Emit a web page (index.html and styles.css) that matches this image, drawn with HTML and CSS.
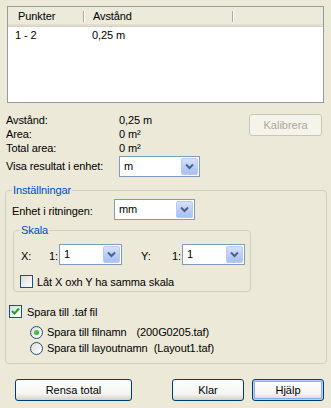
FILE: index.html
```html
<!DOCTYPE html>
<html>
<head>
<meta charset="utf-8">
<link rel="stylesheet" href="styles.css">
</head>
<body>
<div class="dialog">
  <div class="list">
    <div class="list-head">
      <div class="col c1">Punkter</div>
      <div class="col c2">Avstånd</div>
      <div class="col c3"></div>
    </div>
    <div class="list-row">
      <div class="cell c1">1 - 2</div>
      <div class="cell c2">0,25 m</div>
    </div>
  </div>

  <div class="info">
    <div class="info-grid">
      <div class="lbl">Avstånd:</div><div class="val">0,25 m</div>
      <div class="lbl">Area:</div><div class="val">0 m²</div>
      <div class="lbl">Total area:</div><div class="val">0 m²</div>
      <div class="lbl lbl-combo">Visa resultat i enhet:</div>
      <div class="combo combo-unit"><span class="combo-val">m</span><span class="combo-btn"><svg width="9" height="7" viewBox="0 0 9 7"><path d="M1 1.5 L4.5 5 L8 1.5" fill="none" stroke="#4d6185" stroke-width="2"/></svg></span></div>
    </div>
    <button class="btn btn-disabled btn-cal" disabled>Kalibrera</button>
  </div>

  <fieldset class="group group-main">
    <legend>Inställningar</legend>
    <div class="row-enhet">
      <span class="lbl-enhet">Enhet i ritningen:</span>
      <div class="combo combo-mm"><span class="combo-val">mm</span><span class="combo-btn"><svg width="9" height="7" viewBox="0 0 9 7"><path d="M1 1.5 L4.5 5 L8 1.5" fill="none" stroke="#4d6185" stroke-width="2"/></svg></span></div>
    </div>
    <fieldset class="group group-skala">
      <legend>Skala</legend>
      <div class="row-scale">
        <span class="axis">X:</span>
        <span class="ratio">1:</span>
        <div class="combo combo-scale"><span class="combo-val">1</span><span class="combo-btn"><svg width="9" height="7" viewBox="0 0 9 7"><path d="M1 1.5 L4.5 5 L8 1.5" fill="none" stroke="#4d6185" stroke-width="2"/></svg></span></div>
        <span class="axis axis-y">Y:</span>
        <span class="ratio">1:</span>
        <div class="combo combo-scale"><span class="combo-val">1</span><span class="combo-btn"><svg width="9" height="7" viewBox="0 0 9 7"><path d="M1 1.5 L4.5 5 L8 1.5" fill="none" stroke="#4d6185" stroke-width="2"/></svg></span></div>
      </div>
      <label class="check-row check-same">
        <span class="checkbox"></span>
        <span>Låt X oxh Y ha samma skala</span>
      </label>
    </fieldset>
    <label class="check-row check-save">
      <span class="checkbox checked"><svg width="9" height="9" viewBox="0 0 9 9"><path d="M1 4 L3.5 6.5 L8 1.5" fill="none" stroke="#21a121" stroke-width="2"/></svg></span>
      <span>Spara till .taf fil</span>
    </label>
    <label class="radio-row radio-first">
      <span class="radio on"></span>
      <span class="radio-text">Spara till filnamn</span>
      <span class="radio-file f1">(200G0205.taf)</span>
    </label>
    <label class="radio-row">
      <span class="radio"></span>
      <span class="radio-text">Spara till layoutnamn</span>
      <span class="radio-file f2">(Layout1.taf)</span>
    </label>
  </fieldset>

  <div class="buttons">
    <button class="btn btn-rensa">Rensa total</button>
    <button class="btn btn-klar">Klar</button>
    <button class="btn btn-default">Hjälp</button>
  </div>
</div>
</body>
</html>
```

FILE: styles.css
```css
html, body {
  margin: 0;
  padding: 0;
}
body {
  width: 331px;
  height: 408px;
  background: #ece9d8;
  font-family: "Liberation Sans", Arial, sans-serif;
  font-size: 11px;
  letter-spacing: -0.1px;
  color: #000;
  overflow: hidden;
}
.dialog {
  padding-top: 6px;
}

/* list view */
.list {
  margin-left: 7px;
  width: 317px;
  height: 97px;
  box-sizing: border-box;
  border: 1px solid #979a9a;
  background: #fff;
}
.list-head {
  display: flex;
  height: 20px;
  box-sizing: border-box;
  background: #ebeadb;
  border-bottom: 1px solid #d6d2c2;
  box-shadow: inset 0 -2px 0 #e2decd;
}
.col {
  position: relative;
  line-height: 19px;
  padding-left: 10px;
  box-sizing: border-box;
}
.col.c1 { width: 76px; }
.col.c2 { width: 149px; padding-left: 9px; }
.col.c3 { flex: 1; }
.col.c1::after, .col.c2::after {
  content: "";
  position: absolute;
  right: 0;
  top: 4px;
  bottom: 4px;
  width: 1px;
  background: #aca899;
  box-shadow: 1px 0 0 #fff;
}
.list-row {
  display: flex;
  height: 17px;
  line-height: 16px;
}
.cell.c1 { width: 76px; padding-left: 7px; box-sizing: border-box; }
.cell.c2 { padding-left: 8px; }

/* info */
.info {
  display: flex;
  align-items: flex-start;
  margin-top: 10px;
  padding-left: 6px;
  padding-right: 9px;
}
.info-grid {
  display: grid;
  grid-template-columns: 113px 81px;
  grid-auto-rows: 14px;
  line-height: 14px;
}
.lbl-combo {
  line-height: 21px;
  margin-top: 1px;
}
.info-grid .combo-unit {
  margin-top: 1px;
}
.info-grid > :nth-last-child(-n+2) {
  height: 21px;
}
.btn-cal {
  margin-left: auto;
  margin-top: 1px;
  width: 73px;
  height: 23px;
}

/* combo */
.combo {
  display: flex;
  height: 21px;
  box-sizing: border-box;
  border: 1px solid #7f9db9;
  background: #fff;
  padding: 1px;
}
.combo-val {
  flex: 1;
  padding-left: 3px;
  line-height: 17px;
}
.combo-btn {
  width: 17px;
  height: 17px;
  box-sizing: border-box;
  border: 1px solid #b9c9f3;
  border-radius: 2px;
  background: linear-gradient(#d6e2fd, #b6cbf8 60%, #a9c0f3);
  display: flex;
  align-items: center;
  justify-content: center;
}
.combo-unit { width: 81px; }
.combo-mm { width: 81px; }
.combo-scale { width: 63px; }

/* groups */
.group {
  border: 1px solid #d0d0bf;
  border-radius: 4px;
  margin: 0;
  padding: 0;
  min-width: 0;
}
.group legend {
  color: #0046d5;
  padding: 0 1px;
  line-height: 14px;
}
.group-main {
  margin: 14px 0 0 5px;
  width: 322px;
  box-sizing: border-box;
  padding: 0 0 7px 6px;
}
.row-enhet {
  display: flex;
  align-items: center;
  margin-top: 2px;
}
.lbl-enhet {
  width: 102px;
  padding-top: 3px;
}
.group-skala {
  margin: 3px 0 0 1px;
  width: 238px;
  box-sizing: border-box;
  padding: 0 0 3px 6px;
}
.row-scale {
  display: flex;
  align-items: center;
  margin-top: 7px;
}
.axis {
  width: 28px;
  padding-left: 1px;
  padding-top: 2px;
}
.axis-y { margin-left: 18px; width: 31px; }
.ratio {
  width: 10px;
  padding-top: 2px;
}

/* checkbox / radio */
.check-row {
  display: flex;
  align-items: center;
  gap: 4px;
}
.check-same {
  margin-top: 10px;
}
.check-save {
  margin: 13px 0 0 -3px;
  gap: 5px;
}
.checkbox {
  width: 13px;
  height: 13px;
  box-sizing: border-box;
  border: 1px solid #1c5180;
  background: linear-gradient(135deg, #dcdcd7, #fff);
  display: flex;
  align-items: center;
  justify-content: center;
}
.radio-row {
  display: flex;
  align-items: center;
  height: 16px;
  margin-left: 18px;
  white-space: nowrap;
}
.radio-first {
  margin-top: 6px;
}
.radio {
  flex: none;
  width: 13px;
  height: 13px;
  box-sizing: border-box;
  border: 1px solid #1c5180;
  border-radius: 50%;
  background: linear-gradient(135deg, #dcdcd7, #fff);
  margin-right: 4px;
  position: relative;
}
.radio.on::after {
  content: "";
  position: absolute;
  left: 3px;
  top: 3px;
  width: 5px;
  height: 5px;
  border-radius: 50%;
  background: radial-gradient(circle at 40% 40%, #55d051, #21a121);
}
.radio-file.f1 { margin-left: 10px; }
.radio-file.f2 { margin-left: 6px; }

/* buttons */
.btn {
  font-family: inherit;
  font-size: 11px;
  color: #000;
  height: 22px;
  box-sizing: border-box;
  border: 1px solid #003c74;
  border-radius: 3px;
  background: linear-gradient(#fff, #f4f4f0 70%, #d6d0c5);
  padding: 0;
}
.btn-disabled {
  border-color: #c9c7ba;
  background: #f5f4ea;
  color: #aca899;
}
.buttons {
  display: flex;
  margin-top: 15px;
  padding-left: 15px;
}
.btn-rensa { width: 117px; }
.btn-klar { width: 72px; margin-left: 40px; }
.btn-default {
  width: 72px;
  margin-left: 8px;
  box-shadow: inset 0 0 0 1px #bccff5, inset 0 0 0 2px #89adf0;
}
```
